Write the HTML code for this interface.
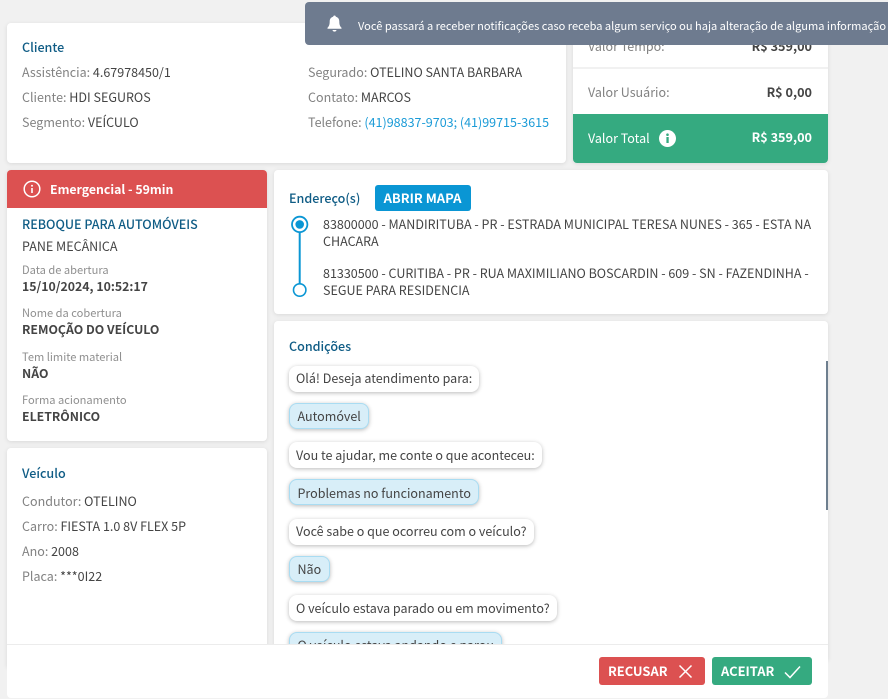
<!DOCTYPE html>
<html lang="pt-BR"><head><meta charset="utf-8"><title>Serviço</title>
<style>
*{box-sizing:border-box}
html,body{margin:0;padding:0;width:888px;height:699px;overflow:hidden;background:#f1f1f1}
body{position:relative;font-family:"Noto Sans CJK JP","Liberation Sans",sans-serif;font-size:12.52px;color:#444}
.c{position:absolute;background:#fff;border-radius:4px;box-shadow:0 1px 5px rgba(0,0,0,.1)}
.t{position:absolute;line-height:20px;white-space:nowrap}
.h{color:#0f5c85;font-weight:500;font-size:12.55px}
.g{color:#828282}
.b{font-weight:700;color:#444;font-size:12.3px}
.v{font-weight:700;color:#444;font-size:12.65px}
.s{font-size:11.1px;color:#8f8f8f}
.m{position:absolute;left:289px;height:26px;line-height:24px;padding:0 7px;background:#fff;border-radius:8px;box-shadow:0 1px 4px rgba(0,0,0,.28);white-space:nowrap}
.a{background:#d8eef8;border:1px solid #a9dcf2;padding:0 7.5px;line-height:24px}
.d{padding-top:1px}
</style></head><body>

<div class="c" style="left:7px;top:23px;width:559px;height:140px"></div>
<div class="t h" style="left:22px;top:37px">Cliente</div>
<div class="t" style="left:22px;top:62px"><span class="g">Assistência:</span> 4.67978450/1</div>
<div class="t" style="left:22px;top:87px"><span class="g">Cliente:</span> HDI SEGUROS</div>
<div class="t" style="left:22px;top:112px"><span class="g">Segmento:</span> VEÍCULO</div>
<div class="t" style="left:308px;top:62px"><span class="g">Segurado:</span> OTELINO SANTA BARBARA</div>
<div class="t" style="left:308px;top:87px"><span class="g">Contato:</span> MARCOS</div>
<div class="t" style="left:308px;top:112px"><span class="g">Telefone:</span> <span style="color:#1b9bd7">(41)98837-9703; (41)99715-3615</span></div>

<div class="c" style="left:573px;top:23px;width:255px;height:140px"></div>
<div style="position:absolute;left:573px;top:67px;width:255px;height:2px;background:#f1f1f1"></div>
<div class="t g" style="left:588px;top:36px">Valor Tempo:</div>
<div class="t v" style="right:76px;top:36px">R$ 359,00</div>
<div class="t g" style="left:588px;top:82px">Valor Usuário:</div>
<div class="t v" style="right:76px;top:82px">R$ 0,00</div>
<div style="position:absolute;left:573px;top:114px;width:255px;height:49px;background:#35aa80;border-radius:0 0 4px 4px"></div>
<div class="t" style="left:588px;top:128px;color:#fff">Valor Total</div>
<svg style="position:absolute;left:659px;top:130px" width="17" height="17" viewBox="0 0 17 17"><circle cx="8.5" cy="8.500" r="8.500" fill="#fff"/><rect x="7.400" y="7" width="2.300" height="6" fill="#35aa80"/><circle cx="8.500" cy="4.700" r="1.300" fill="#35aa80"/></svg>
<div class="t" style="right:76px;top:127px;color:#fff;font-weight:700;font-size:12.65px">R$ 359,00</div>

<div style="position:absolute;left:305px;top:2px;width:583px;height:43px;background:#6e7b8f;border-radius:4px 0 0 4px"></div>
<svg style="position:absolute;left:327px;top:15px" width="15" height="17" viewBox="0 0 15 17"><path d="M7.500 0.500c.8 0 1.300.5 1.300 1.300 2.300.5 3.500 2.300 3.500 4.700 0 3.200 .7 4.800 2.200 6.300v1H.5v-1C2 11.300 2.700 9.700 2.700 6.500c0-2.400 1.200-4.200 3.500-4.700 0-.8.500-1.300 1.300-1.300zM5.500 15h4c0 1-.9 1.600-2 1.600s-2-.6-2-1.600z" fill="#fff"/></svg>
<div class="t" style="left:358px;top:16px;color:#fff;font-size:11.06px">Você passará a receber notificações caso receba algum serviço ou haja alteração de alguma informação</div>

<div class="c" style="left:7px;top:170px;width:260px;height:271px"></div>
<div style="position:absolute;left:7px;top:170px;width:260px;height:38px;background:#dc5151;border-radius:4px 4px 0 0"></div>
<svg style="position:absolute;left:23px;top:180px" width="18" height="18" viewBox="0 0 18 18"><circle cx="9" cy="9" r="7.800" fill="none" stroke="#fff" stroke-width="1.500"/><rect x="8.200" y="8" width="1.600" height="5" fill="#fff"/><circle cx="9" cy="5.700" r="1" fill="#fff"/></svg>
<div class="t" style="left:50px;top:179px;color:#fff;font-weight:700;font-size:12.3px">Emergencial - 59min</div>
<div class="t h" style="left:22px;top:214px;font-size:12.5px">REBOQUE PARA AUTOMÓVEIS</div>
<div class="t" style="left:22px;top:236px">PANE MECÂNICA</div>
<div class="t s" style="left:22px;top:260px">Data de abertura</div>
<div class="t b" style="left:22px;top:276px">15/10/2024, 10:52:17</div>
<div class="t s" style="left:22px;top:303px">Nome da cobertura</div>
<div class="t b" style="left:22px;top:319px">REMOÇÃO DO VEÍCULO</div>
<div class="t s" style="left:22px;top:347px">Tem limite material</div>
<div class="t b" style="left:22px;top:363px">NÃO</div>
<div class="t s" style="left:22px;top:390px">Forma acionamento</div>
<div class="t b" style="left:22px;top:406px">ELETRÔNICO</div>

<div class="c" style="left:7px;top:448px;width:260px;height:220px"></div>
<div class="t h" style="left:22px;top:463px">Veículo</div>
<div class="t" style="left:22px;top:491px"><span class="g">Condutor:</span> OTELINO</div>
<div class="t" style="left:22px;top:516px"><span class="g">Carro:</span> FIESTA 1.0 8V FLEX 5P</div>
<div class="t" style="left:22px;top:541px"><span class="g">Ano:</span> 2008</div>
<div class="t" style="left:22px;top:566px"><span class="g">Placa:</span> ***0I22</div>

<div class="c" style="left:274px;top:170px;width:554px;height:144px"></div>
<div class="t h" style="left:289px;top:188px">Endereço(s)</div>
<div style="position:absolute;left:375px;top:185px;width:96px;height:26px;line-height:25px;background:#0a96d4;color:#fff;border-radius:3px;text-align:center;font-weight:700;font-size:13px;padding-right:1px">ABRIR MAPA</div>
<svg style="position:absolute;left:289px;top:214px" width="22" height="86" viewBox="0 0 22 86"><line x1="10.700" y1="12" x2="10.700" y2="70" stroke="#0a96d4" stroke-width="2"/><circle cx="10.700" cy="10.400" r="7.700" fill="#fff" stroke="#0a96d4" stroke-width="1.800"/><circle cx="10.700" cy="10.400" r="4.300" fill="#0a96d4"/><circle cx="10.700" cy="76" r="6.200" fill="#fff" stroke="#0a96d4" stroke-width="1.600"/></svg>
<div class="t" style="left:323px;top:214px">83800000 - MANDIRITUBA - PR - ESTRADA MUNICIPAL TERESA NUNES - 365 - ESTA NA</div>
<div class="t" style="left:323px;top:231px">CHACARA</div>
<div class="t" style="left:323px;top:263px">81330500 - CURITIBA - PR - RUA MAXIMILIANO BOSCARDIN - 609 - SN - FAZENDINHA -</div>
<div class="t" style="left:323px;top:280px">SEGUE PARA RESIDENCIA</div>

<div class="c" style="left:274px;top:321px;width:554px;height:340px"></div>
<div class="t h" style="left:289px;top:336px">Condições</div>
<div style="position:absolute;left:826px;top:361px;width:2px;height:149px;background:#6e7f8f"></div>
<div class="m" style="top:366px">Olá! Deseja atendimento para:</div>
<div class="m a" style="top:403px">Automóvel</div>
<div class="m d" style="top:442px">Vou te ajudar, me conte o que aconteceu:</div>
<div class="m a d" style="top:479px">Problemas no funcionamento</div>
<div class="m" style="top:519px">Você sabe o que ocorreu com o veículo?</div>
<div class="m a" style="top:556px">Não</div>
<div class="m d" style="top:595px">O veículo estava parado ou em movimento?</div>
<div class="m a" style="top:632px">O veículo estava andando e parou</div>

<div style="position:absolute;left:7px;top:644px;width:821px;height:54px;background:#fff;border-top:1px solid #ececec;border-radius:0 0 4px 4px"></div>
<div style="position:absolute;left:599px;top:657px;width:106px;height:28px;background:#dc5151;border-radius:3px"></div>
<div class="t" style="left:608px;top:661px;color:#fff;font-weight:700;font-size:12.9px">RECUSAR</div>
<svg style="position:absolute;left:678px;top:664px" width="15" height="15" viewBox="0 0 15 15"><path d="M1.500 1.500L13.500 13.500M13.500 1.500L1.500 13.500" stroke="#fff" stroke-width="1.500" fill="none"/></svg>
<div style="position:absolute;left:712px;top:657px;width:100px;height:28px;background:#35aa80;border-radius:3px"></div>
<div class="t" style="left:721px;top:661px;color:#fff;font-weight:700;font-size:12.9px">ACEITAR</div>
<svg style="position:absolute;left:784px;top:665px" width="17" height="14" viewBox="0 0 17 14"><path d="M1 7.500L6 12.500L16 1.500" stroke="#fff" stroke-width="1.500" fill="none"/></svg>
</body></html>
